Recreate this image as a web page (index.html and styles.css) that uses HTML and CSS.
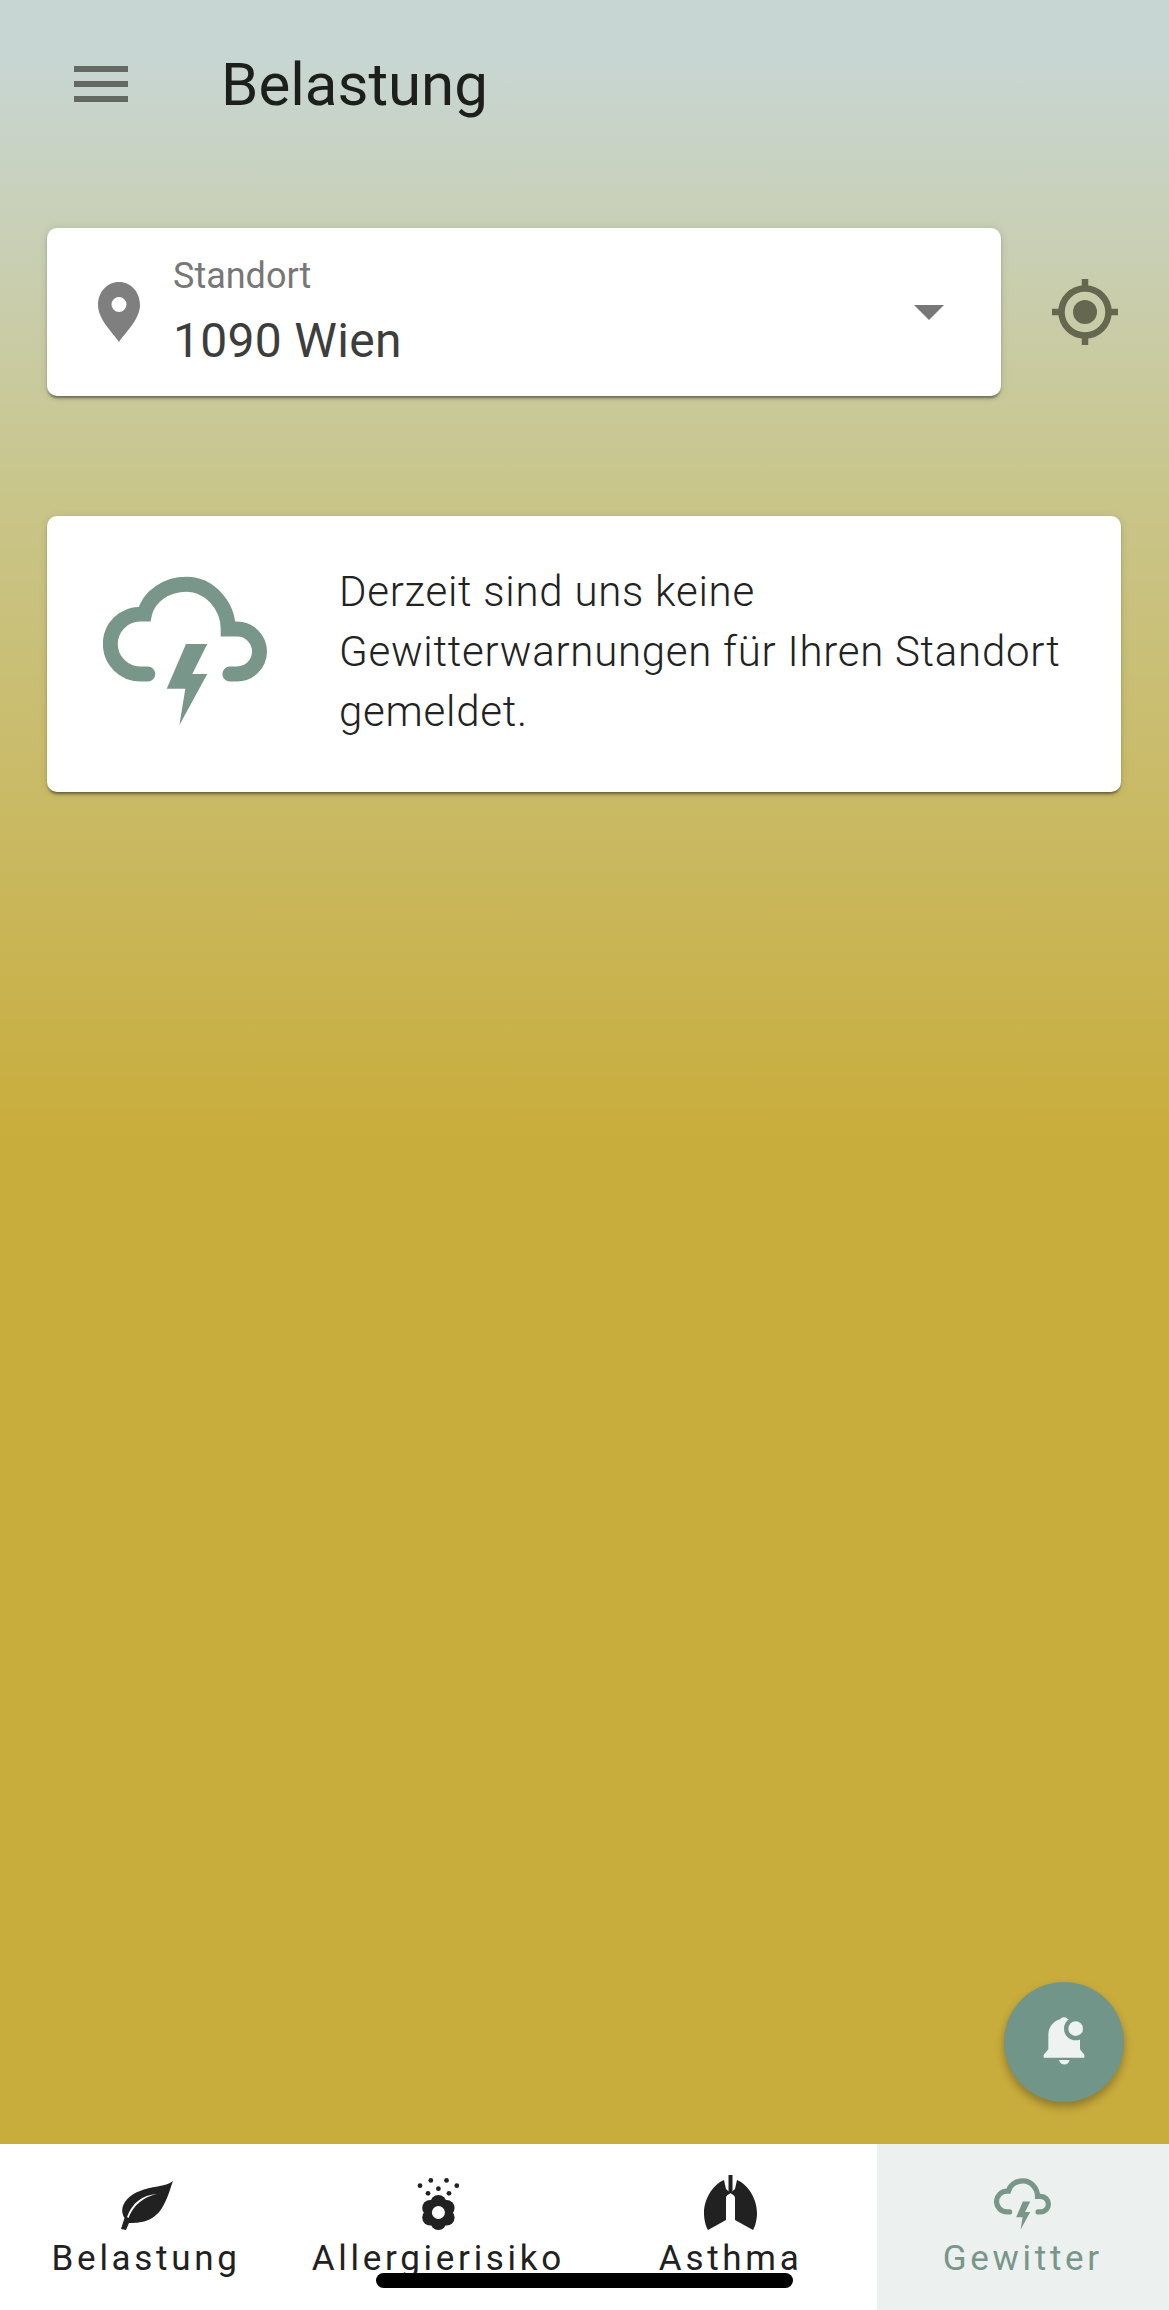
FILE: index.html
```html
<!DOCTYPE html>
<html lang="de">
<head>
    <meta charset="UTF-8">
    <meta name="viewport" content="width=device-width, initial-scale=1.0">
    <title>Belastung</title>
    <link rel="stylesheet" href="styles.css">
</head>
<body>
    <svg class="defs" width="0" height="0">
        <symbol id="storm" viewBox="68 82 494 448">
            <path class="storm-cloud" d="M203 375H180A90 90 0 0 1 180 195H193C205 140 260 105 320 105C385 105 445 165 445 240H472A67.5 67.5 0 0 1 472 375H450"/>
            <polygon points="318,285 382,285 337,375 382,375 298,530 316,420 260,420"/>
        </symbol>
    </svg>

    <div class="app">
        <header class="topbar">
            <div class="menu-icon"><span></span><span></span><span></span></div>
            <h1>Belastung</h1>
        </header>

        <main class="content">
            <div class="location-row">
                <div class="card location-card">
                    <svg class="pin" viewBox="0 0 42 60">
                        <path fill-rule="evenodd" d="M21 0C9 0 0 10 0 23C0 37 14 50 21 60C28 50 42 37 42 23C42 10 33 0 21 0ZM21 15A7.5 7.5 0 1 1 21 30A7.5 7.5 0 1 1 21 15Z"/>
                    </svg>
                    <div class="location-text">
                        <div class="location-label">Standort</div>
                        <div class="location-value">1090 Wien</div>
                    </div>
                    <div class="dropdown-arrow"></div>
                </div>
                <svg class="locate" viewBox="0 0 66 66">
                    <circle cx="33" cy="33" r="23.5" fill="none" stroke-width="6.5"/>
                    <circle class="locate-dot" cx="33" cy="33" r="12"/>
                    <path d="M33 0V10M33 56V66M0 33H10M56 33H66" stroke-width="6.5"/>
                </svg>
            </div>

            <div class="card warning-card">
                <svg class="warning-icon"><use href="#storm"/></svg>
                <p>Derzeit sind uns keine Gewitterwarnungen für Ihren Standort gemeldet.</p>
            </div>
        </main>

        <nav class="tabs">
            <div class="tab">
                <svg class="tab-icon" width="53" height="49" viewBox="0 0 53 49">
                    <path d="M53 0C46 6 30 5 20 10C6 15 -2 27 4.5 37L1 48L6 49L9 42C20 42 33 41 42 27C48 17 50 8 53 0Z"/>
                    <path class="leaf-vein" d="M7 36C12 22 22 14 37 13C24 16 14 23 8.5 37Z"/>
                </svg>
                <span>Belastung</span>
            </div>
            <div class="tab">
                <svg class="tab-icon" width="43" height="52" viewBox="0 0 43 52">
                    <circle cx="3" cy="7.7" r="2.4"/><circle cx="13.8" cy="2.4" r="2.4"/><circle cx="29.5" cy="2.4" r="2.4"/><circle cx="39.8" cy="7.7" r="2.4"/>
                    <circle cx="21.4" cy="10.7" r="2.4"/><circle cx="11" cy="15.3" r="2.4"/><circle cx="32" cy="15.3" r="2.4"/>
                    <circle cx="21.4" cy="25" r="8"/><circle cx="21.4" cy="44" r="8"/>
                    <circle cx="13.2" cy="30" r="8"/><circle cx="29.6" cy="30" r="8"/>
                    <circle cx="13.2" cy="39.5" r="8"/><circle cx="29.6" cy="39.5" r="8"/>
                    <circle cx="21.4" cy="34.5" r="11"/>
                    <circle class="leaf-vein" cx="21.4" cy="34.5" r="6.5"/>
                </svg>
                <span>Allergierisiko</span>
            </div>
            <div class="tab">
                <svg class="tab-icon" width="53" height="55" viewBox="0 0 53 55">
                    <path d="M24.5 0H28.5V18H24.5Z"/>
                    <path d="M20 5C8 10 0 25 0 38C0 45 2 52 4 55L22 45V23C22 20 26 19 26.5 18L22 14Z"/>
                    <path d="M33 5C45 10 53 25 53 38C53 45 51 52 49 55L31 45V23C31 20 27 19 26.5 18L31 14Z"/>
                </svg>
                <span>Asthma</span>
            </div>
            <div class="tab tab-active">
                <svg class="tab-icon" width="57" height="52"><use href="#storm"/></svg>
                <span>Gewitter</span>
            </div>
        </nav>

        <button class="fab">
            <svg viewBox="72 66 360 360">
                <path class="bell" d="M191 284L205 268V225C205 200 222 182 240 178C245 170 256 170 262 176C280 182 296 200 300 225V268L313 284V293H191Z"/>
                <path class="bell" d="M237 300H269C265 318 241 318 237 300Z"/>
                <circle class="bell-cut" cx="287" cy="206" r="35"/>
                <circle class="bell" cx="287" cy="206" r="22"/>
            </svg>
        </button>

        <div class="home-bar"></div>
    </div>
</body>
</html>
```

FILE: styles.css
```css
* {
    box-sizing: border-box;
}
body {
    margin: 0;
    font-family: Roboto, "Liberation Sans", sans-serif;
}
.defs {
    position: absolute;
}
.app {
    position: relative;
    width: 1169px;
    height: 2310px;
    display: flex;
    flex-direction: column;
    overflow: hidden;
    background: linear-gradient(#c8d6d3 0, #c8d6d3 60px, #c9c68c 480px, #c9ad3c 1140px);
}
.topbar {
    height: 168px;
    display: flex;
    align-items: center;
    padding-left: 74px;
    flex-shrink: 0;
}
.menu-icon {
    width: 54px;
    height: 36px;
    display: flex;
    flex-direction: column;
    justify-content: space-between;
}
.menu-icon span {
    height: 6px;
    background: #636961;
}
.topbar h1 {
    margin: 0 0 0 93px;
    font-size: 60px;
    font-weight: 400;
    color: #1c1f1c;
}
.content {
    flex: 1;
    padding: 60px 48px 0 47px;
}
.card {
    background: #fff;
    border-radius: 10px;
    box-shadow: 0 3px 3px -1px rgba(0, 0, 0, 0.45), 0 1px 8px rgba(0, 0, 0, 0.12);
}
.location-row {
    display: flex;
    align-items: center;
}
.location-card {
    width: 954px;
    height: 168px;
    display: flex;
    align-items: center;
    padding: 0 57px 0 51px;
}
.pin {
    width: 42px;
    height: 60px;
    fill: #7f7f7f;
    flex-shrink: 0;
}
.location-text {
    flex: 1;
    margin-left: 33px;
    padding-top: 4px;
}
.location-label {
    font-size: 36px;
    color: #777;
    line-height: 40px;
    margin-top: -4px;
}
.location-value {
    font-size: 48px;
    letter-spacing: 0.3px;
    color: #3d3d3d;
    line-height: 56px;
    margin-top: 17px;
}
.dropdown-arrow {
    width: 0;
    height: 0;
    border-left: 15px solid transparent;
    border-right: 15px solid transparent;
    border-top: 15px solid #777;
}
.locate {
    width: 66px;
    height: 66px;
    margin-left: 51px;
    fill: #66674f;
    stroke: #66674f;
}
.locate-dot {
    stroke: none;
}
.warning-card {
    width: 1074px;
    height: 276px;
    margin-top: 120px;
    display: flex;
    align-items: center;
    padding-left: 56px;
}
.warning-icon {
    width: 164px;
    height: 150px;
    flex-shrink: 0;
    fill: #78968a;
    margin-top: -6px;
}
.storm-cloud {
    fill: none;
    stroke: #78968a;
    stroke-width: 45;
    stroke-linecap: round;
}
.warning-card p {
    margin: -4px 0 0 72px;
    width: 740px;
    font-size: 42px;
    font-weight: 300;
    letter-spacing: 0.74px;
    line-height: 60px;
    color: #222;
}
.tabs {
    height: 166px;
    display: grid;
    grid-template-columns: repeat(4, 1fr);
    background: #fff;
    flex-shrink: 0;
}
.tab {
    display: flex;
    flex-direction: column;
    align-items: center;
    justify-content: flex-end;
    padding-bottom: 28px;
    font-size: 35px;
    letter-spacing: 3.7px;
    color: #212121;
    fill: #212121;
}
.tab span {
    line-height: 46px;
}
.tab-icon {
    display: block;
    margin-bottom: 6px;
}
.leaf-vein {
    fill: #fff;
}
.tab-active {
    background: #ecf1ef;
    color: #78968a;
    fill: #78968a;
}
.fab {
    position: absolute;
    left: 1004px;
    top: 1982px;
    width: 120px;
    height: 120px;
    padding: 0;
    border: none;
    border-radius: 50%;
    background: #72958a;
    box-shadow: 0 5px 10px rgba(0, 0, 0, 0.3);
}
.fab svg {
    display: block;
    width: 120px;
    height: 120px;
}
.bell {
    fill: #eef2f1;
}
.bell-cut {
    fill: #72958a;
}
.home-bar {
    position: absolute;
    left: 376px;
    top: 2273px;
    width: 417px;
    height: 15px;
    border-radius: 8px;
    background: #000;
}
```
